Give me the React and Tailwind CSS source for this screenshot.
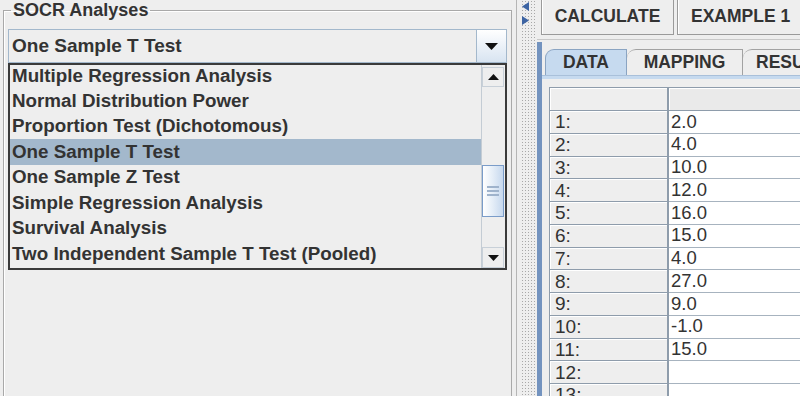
import React from 'react'

const ITEMS = [
  'Multiple Regression Analysis',
  'Normal Distribution Power',
  'Proportion Test (Dichotomous)',
  'One Sample T Test',
  'One Sample Z Test',
  'Simple Regression Analysis',
  'Survival Analysis',
  'Two Independent Sample T Test (Pooled)',
]

const DATA = ['2.0', '4.0', '10.0', '12.0', '16.0', '15.0', '4.0', '27.0', '9.0', '-1.0', '15.0', '', '']

function Tri({ dir = 'down', w = 12, h = 6, color = '#111' }) {
  const pts = {
    down: `0,0 ${w},0 ${w / 2},${h}`,
    up: `0,${h} ${w},${h} ${w / 2},0`,
  }[dir]
  return (
    <svg width={w} height={h} viewBox={`0 0 ${w} ${h}`}>
      <polygon points={pts} fill={color} />
    </svg>
  )
}

function SideArrow({ dir }) {
  return (
    <svg width="7" height="9" viewBox="0 0 7 9">
      <polygon points={dir === 'left' ? '7,0 7,9 0,4.5' : '0,0 0,9 7,4.5'} fill="#3d64a3" />
    </svg>
  )
}

export default function App() {
  return (
    <div
      className="w-[800px] h-[396px] overflow-hidden bg-[#eeeeee] flex text-[#333333]"
      style={{ fontFamily: '"Liberation Sans", Arial, sans-serif' }}
    >
      {/* ── Left: analyses chooser ───────────────────── */}
      <div className="w-[516px] shrink-0 pl-[3px]">
        <fieldset className="w-[508px] h-[420px] border border-[#a9a9a9] shadow-[inset_1px_1px_0_#ffffff] px-[4px]">
          <legend className="ml-[3px] px-[2px] text-[18px] font-bold leading-[20px]">SOCR Analyses</legend>

          {/* combo box */}
          <div className="mt-[9px] w-[499px] h-[34px] border border-[#a3b8cc] flex bg-[#eeeeee]">
            <div className="flex-1 flex items-center pl-[3px] text-[19px] font-bold">One Sample T Test</div>
            <div className="w-[30px] border-l border-[#a3b8cc] bg-gradient-to-b from-[#ffffff] to-[#d8e4f1] flex items-center justify-center">
              <Tri dir="down" w={13} h={7} />
            </div>
          </div>

          {/* dropdown list */}
          <div className="w-[499px] h-[207px] border-2 border-[#3a3a3a] flex bg-[#eeeeee]">
            <div className="flex-1 overflow-hidden">
              <div className="-mt-[2px]">
                {ITEMS.map((it, i) => (
                  <div
                    key={it}
                    className={`h-[25.43px] flex items-center pl-[2px] text-[18.8px] font-bold whitespace-nowrap ${
                      i === 3 ? 'bg-[#a3b8cc]' : ''
                    }`}
                  >
                    {it}
                  </div>
                ))}
              </div>
            </div>
            <div className="w-[24px] border-l border-[#c4ccd4] flex flex-col pt-[2px]">
              <div className="h-[20px] mr-[1px] border border-[#c8d0d8] bg-[#eeeeee] flex items-center justify-center">
                <Tri dir="up" w={11} h={6} />
              </div>
              <div className="flex-1">
                <div className="mt-[78px] h-[52px] mr-[1px] border border-[#7a9cc9] bg-gradient-to-r from-[#ffffff] via-[#e4edf7] to-[#c6d8ee] flex flex-col items-center justify-center gap-[2px]">
                  <div className="w-[12px] h-[2px] bg-[#9fb3cc]" />
                  <div className="w-[12px] h-[2px] bg-[#9fb3cc]" />
                  <div className="w-[12px] h-[2px] bg-[#9fb3cc]" />
                </div>
              </div>
              <div className="h-[21px] mr-[1px] border border-[#c8d0d8] bg-[#eeeeee] flex items-center justify-center">
                <Tri dir="down" w={11} h={6} />
              </div>
            </div>
          </div>
        </fieldset>
      </div>

      {/* ── Split pane divider ───────────────────────── */}
      <div className="w-[21px] shrink-0 border-l border-[#b5b5b5] flex">
        <div className="w-[4px]" />
        <div className="w-[14px] flex flex-col bg-[radial-gradient(circle,#a8a8a8_0.8px,transparent_1px)] bg-[length:3px_3px]">
          <div className="pt-[2px] pl-[1px] flex flex-col gap-[5px]">
            <SideArrow dir="left" />
            <SideArrow dir="right" />
          </div>
        </div>
      </div>

      {/* ── Right: data panel ────────────────────────── */}
      <div className="flex-1 flex flex-col min-w-0">
        {/* toolbar */}
        <div className="h-[40px] shrink-0 border-b border-[#c8c8c8] flex gap-[3px] pl-[4px]">
          <div className="-mt-[2px] h-[37px] w-[133px] shrink-0 border border-[#9a9a9a] shadow-[inset_1px_1px_0_#ffffff] flex items-center justify-center text-[17.5px] font-bold">
            CALCULATE
          </div>
          <div className="-mt-[2px] h-[37px] w-[140px] shrink-0 border border-[#9a9a9a] shadow-[inset_1px_1px_0_#ffffff] flex items-center pl-[13px] text-[17.5px] font-bold whitespace-nowrap">
            EXAMPLE 1
          </div>
        </div>

        <div className="flex-1 flex">
          <div className="w-[5px] shrink-0 bg-[#7393bf] mt-[2px]" />
          <div className="flex-1 flex flex-col min-w-0">
            {/* tabs */}
            <div className="mt-[9px] h-[26px] shrink-0 flex items-end pl-[3px] whitespace-nowrap">
              <div className="h-[26px] w-[82px] shrink-0 rounded-tl-[9px] border border-b-0 border-[#8aa4c2] bg-[#c6daef] flex items-center justify-center text-[17.5px] font-bold">
                DATA
              </div>
              <div className="h-[26px] w-[116px] shrink-0 rounded-tl-[9px] border border-l-0 border-b-0 border-[#a2a2a2] bg-[#eeeeee] flex items-center justify-center text-[17.5px] font-bold">
                MAPPING
              </div>
              <div className="h-[26px] w-[80px] shrink-0 rounded-tl-[9px] border border-l-0 border-b-0 border-[#a2a2a2] bg-[#eeeeee] flex items-center pl-[13px] text-[17.5px] font-bold">
                RESULT
              </div>
            </div>
            <div className="h-[4px] shrink-0 bg-[#c6daef] border-t border-[#a9c0da]" />

            {/* table */}
            <div className="flex-1 pt-[8px] pl-[7px]">
              <div className="border-t border-l border-[#8e9cab]">
                <div className="h-[23px] flex">
                  <div className="w-[119px] shrink-0 bg-[#eeeeee] border-r-2 border-b border-[#8e9cab] shadow-[inset_1px_1px_0_#ffffff]" />
                  <div className="flex-1 bg-[#eaeaea] border-b border-[#8e9cab] shadow-[inset_1px_1px_0_#ffffff]" />
                </div>
                {DATA.map((v, i) => (
                  <div key={i} className="h-[22.75px] flex">
                    <div className="w-[119px] shrink-0 bg-[#eeeeee] border-r-2 border-b border-[#8e9cab] shadow-[inset_1px_1px_0_#ffffff] flex items-center pl-[5px] text-[19px] leading-none">
                      {i + 1}:
                    </div>
                    <div className="flex-1 bg-white border-b border-[#a7b3bf] flex items-center pl-[2px] text-[18.5px] leading-none">
                      {v}
                    </div>
                  </div>
                ))}
              </div>
            </div>
          </div>
        </div>
      </div>
    </div>
  )
}
